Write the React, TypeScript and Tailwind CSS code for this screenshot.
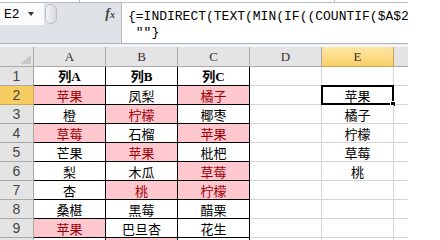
import React from "react";

type Cell = { t: string; p?: boolean };

const c = (t: string, p = false): Cell => ({ t, p });

// A, B, C, E columns for rows 1..10
const rows: { a: Cell; b: Cell; c: Cell; e: string }[] = [
  { a: c("列A"), b: c("列B"), c: c("列C"), e: "" },
  { a: c("苹果", true), b: c("凤梨"), c: c("橘子", true), e: "苹果" },
  { a: c("橙"), b: c("柠檬", true), c: c("椰枣"), e: "橘子" },
  { a: c("草莓", true), b: c("石榴"), c: c("苹果", true), e: "柠檬" },
  { a: c("芒果"), b: c("苹果", true), c: c("枇杷"), e: "草莓" },
  { a: c("梨"), b: c("木瓜"), c: c("草莓", true), e: "桃" },
  { a: c("杏"), b: c("桃", true), c: c("柠檬", true), e: "" },
  { a: c("桑椹"), b: c("黑莓"), c: c("醋栗"), e: "" },
  { a: c("苹果", true), b: c("巴旦杏"), c: c("花生"), e: "" },
  { a: c(""), b: c("", true), c: c(""), e: "" },
];

const cjk = "font-['Noto_Sans_CJK_SC',sans-serif]";

const TableCell: React.FC<{ cell: Cell; bold?: boolean }> = ({ cell, bold }) => (
  <div
    className={`h-[19px] flex items-center justify-center border-r border-b border-black text-[13px] leading-none ${
      cell.p ? "bg-[#ffc7ce] text-[#9c0006]" : "bg-white text-black"
    } ${bold ? "font-bold font-['Liberation_Serif','Noto_Sans_CJK_SC',serif]" : cjk}`}
  >
    {cell.t}
  </div>
);

const App: React.FC = () => {
  return (
    <div className="w-[440px] h-[240px] overflow-hidden bg-white">
      <div className="w-[408px]">
        {/* ribbon bottom edge */}
        <div className="flex h-[3px] border-b border-[#b6bcc6] bg-white">
          <div className="w-[80px] border-r border-[#b6bcc6]" />
          <div className="w-[255px] border-r border-[#b6bcc6]" />
        </div>

        {/* formula bar */}
        <div className="flex h-[41px] bg-[#dfe3e8] border-b border-[#a9b1bc]">
          <div className="w-[121px] flex flex-col">
            <div className="h-[22px] flex items-center">
              <div className="w-[44px] h-full bg-[#fbfbfb] flex items-center pl-[4px] gap-[8px]">
                <span className="font-['Liberation_Mono',monospace] text-[13px] text-black leading-none">E2</span>
                <span className="w-0 h-0 border-l-[3px] border-r-[3px] border-t-[4px] border-l-transparent border-r-transparent border-t-[#333]" />
              </div>
              <div className="w-[12px] h-[20px] rounded-full border border-[#b8bec6] bg-gradient-to-r from-[#f5f6f7] to-[#d6dadf] ml-[1px]" />
              <div className="flex-1 flex justify-end pr-[6px]">
                <span className="font-['Liberation_Serif',serif] italic font-bold text-[14px] text-[#444] leading-none">
                  f<span className="text-[10px]">x</span>
                </span>
              </div>
            </div>
          </div>
          <div className="flex-1 bg-white border-l border-[#b6bcc6] pl-[6px] pt-[6px] font-['Liberation_Mono',monospace] text-[13px] leading-[16px] text-black whitespace-pre overflow-hidden">
            <div>{"{=INDIRECT(TEXT(MIN(IF((COUNTIF($A$2:$A$"}</div>
            <div>{' ""}'}</div>
          </div>
        </div>

        <div className="h-[3px] bg-[#f3f4f6]" />

        {/* grid */}
        <div className="grid grid-cols-[34px_72px_72px_72px_72px_72px_14px]">
          {/* column headers */}
          <div className="h-[20px] bg-[#e4e4e4] border-r border-b border-[#a8a8a8] flex items-end justify-end pr-[2px] pb-[2px]">
            <span className="w-0 h-0 border-b-[9px] border-l-[11px] border-b-[#c8c8c8] border-l-transparent" />
          </div>
          {["A", "B", "C", "D"].map((h) => (
            <div
              key={h}
              className="h-[20px] bg-[#e4e4e4] border-r border-b border-[#a8a8a8] flex items-center justify-center font-['Liberation_Serif',serif] text-[13px] text-[#333]"
            >
              {h}
            </div>
          ))}
          <div className="h-[20px] bg-gradient-to-b from-[#fde7a4] to-[#f8cf67] border-r border-b border-[#c9a857] flex items-center justify-center font-['Liberation_Serif',serif] text-[13px] text-[#333]">
            E
          </div>
          <div className="h-[20px] bg-[#e4e4e4] border-b border-[#a8a8a8]" />

          {rows.map((r, i) => (
            <React.Fragment key={i}>
              <div
                className={`h-[19px] border-r border-b flex items-center justify-center font-['Liberation_Sans',sans-serif] text-[14px] text-[#444] ${
                  i === 1 ? "bg-[#f7cd62] border-[#c9a857]" : "bg-[#e4e4e4] border-[#a8a8a8]"
                }`}
              >
                {i < 9 ? i + 1 : ""}
              </div>
              <TableCell cell={r.a} bold={i === 0} />
              <TableCell cell={r.b} bold={i === 0} />
              <TableCell cell={r.c} bold={i === 0} />
              <div className="h-[19px] border-r border-b border-[#d4d4d4] bg-white" />
              <div
                className={`relative h-[19px] border-r border-b border-[#d4d4d4] bg-white flex items-center justify-center text-[13px] leading-none text-black ${cjk}`}
              >
                {r.e}
                {i === 1 && (
                  <div className="absolute -top-[1px] -left-[1px] w-[73px] h-[20px] border-2 border-black">
                    <div className="absolute -right-[4px] -bottom-[4px] w-[6px] h-[6px] bg-black border border-white" />
                  </div>
                )}
              </div>
              <div className="h-[19px] border-b border-[#d4d4d4] bg-white" />
            </React.Fragment>
          ))}
        </div>
      </div>
    </div>
  );
};

export default App;
